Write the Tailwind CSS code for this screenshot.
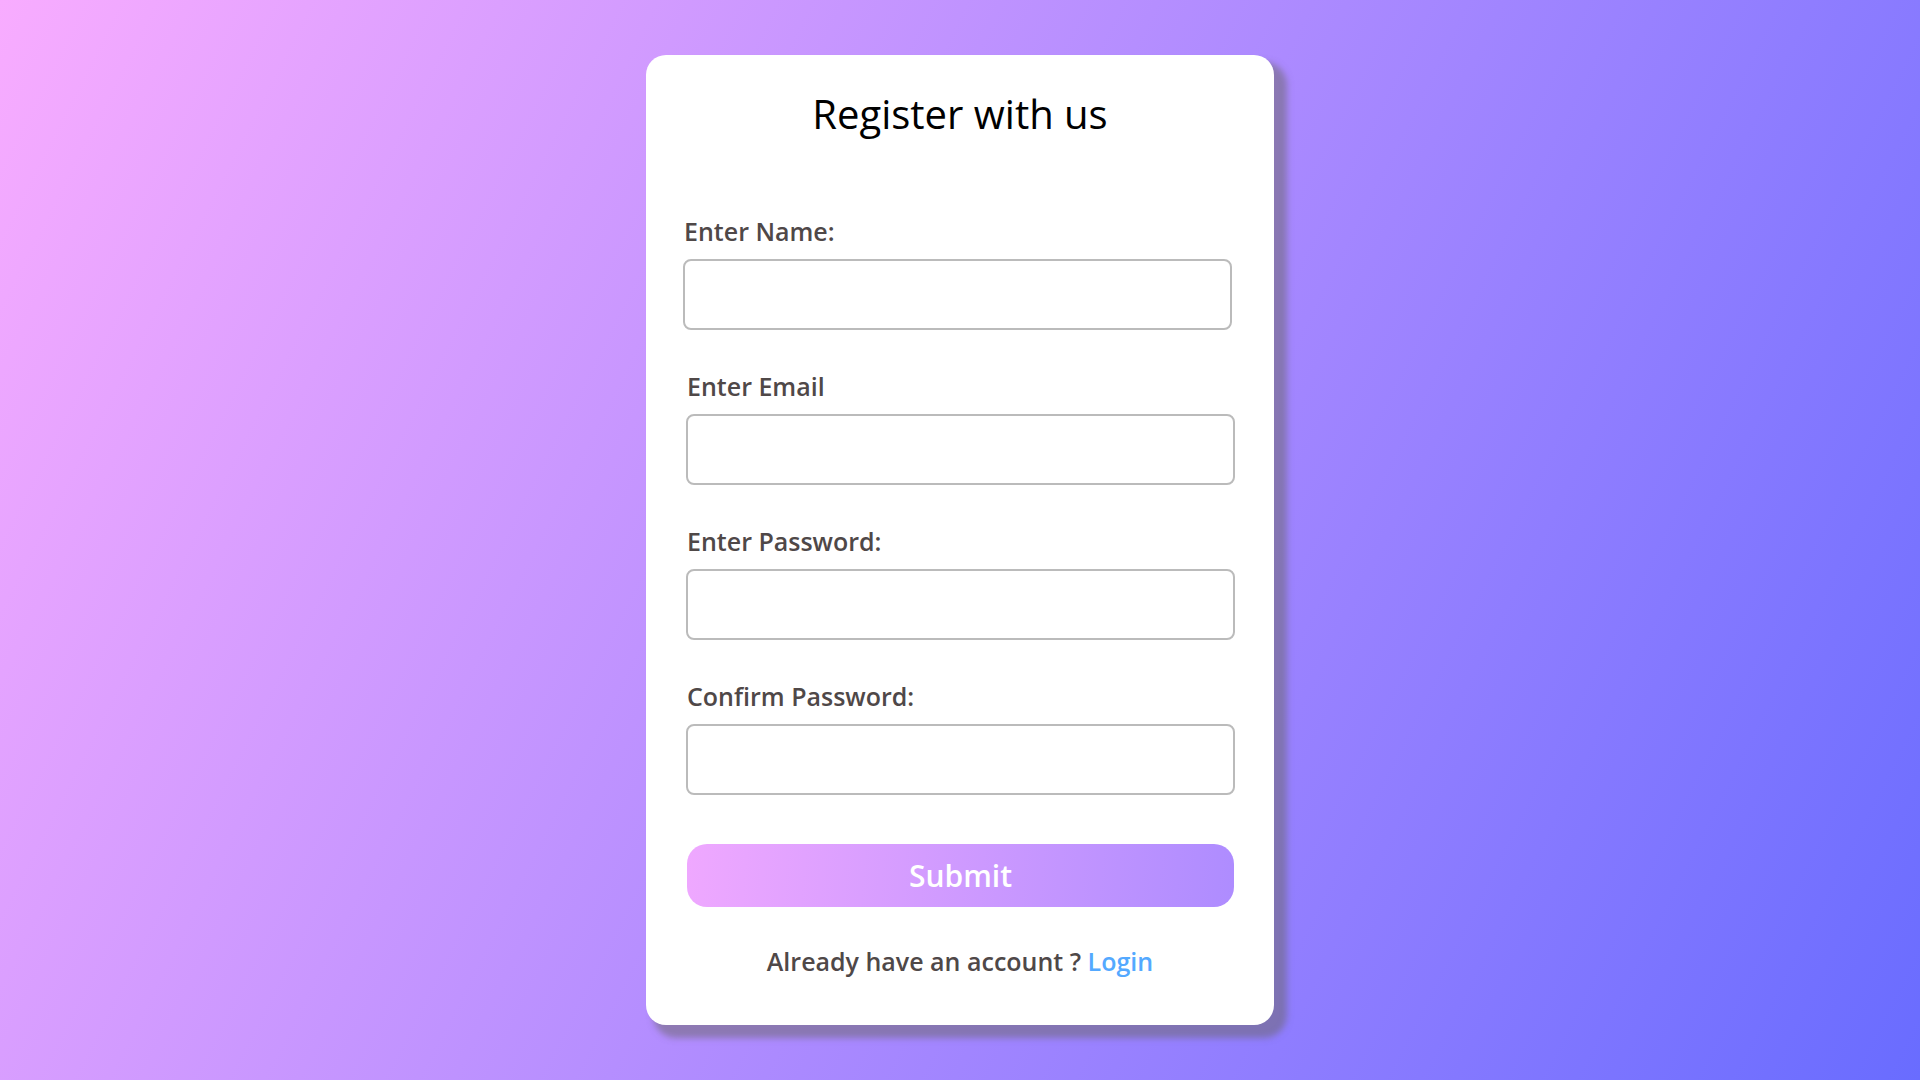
<!DOCTYPE html>
<html lang="en">
<head>
<meta charset="utf-8">
<meta name="viewport" content="width=device-width, initial-scale=1">
<title>Register</title>
<script src="https://cdn.jsdelivr.net/npm/@tailwindcss/browser@4"></script>
</head>
<body class="flex min-h-screen items-center justify-center bg-[linear-gradient(117deg,#f8acff_0%,#696cff_100%)] font-['Open_Sans',sans-serif]">
<main class="w-full max-w-[628px] rounded-[20px] bg-white px-10 pt-[27px] pb-[46px] shadow-[10px_10px_6px_3px_rgba(105,102,103,0.5)]">
<h1 class="text-center text-[40px] leading-[64px] text-black">Register with us</h1>
<form class="mt-[67px] flex flex-col text-[25px] font-semibold text-[#4f4848]">
<div class="-mr-px flex flex-col gap-[38px]">
<div class="mr-[3px] -ml-[3px] flex flex-col gap-[10px]"><label for="name" class="pl-px leading-9">Enter Name:</label><input id="name" type="text" class="h-[71px] rounded-lg border-2 border-[#bbb] px-4"></div>
<div class="flex flex-col gap-[10px]"><label for="email" class="pl-px leading-9">Enter Email</label><input id="email" type="email" class="h-[71px] rounded-lg border-2 border-[#bbb] px-4"></div>
<div class="flex flex-col gap-[10px]"><label for="password" class="pl-px leading-9">Enter Password:</label><input id="password" type="password" class="h-[71px] rounded-lg border-2 border-[#bbb] px-4"></div>
<div class="flex flex-col gap-[10px]"><label for="confirm" class="pl-px leading-9">Confirm Password:</label><input id="confirm" type="password" class="h-[71px] rounded-lg border-2 border-[#bbb] px-4"></div>
</div>
<button type="submit" class="ml-px mt-[49px] h-[63px] rounded-[20px] bg-[linear-gradient(95deg,#efa8ff,#ae8cff)] text-[30px] text-white">Submit</button>
<p class="mt-9 text-center leading-9">Already have an account ? <a href="#" class="text-[#54a9ff]">Login</a></p>
</form>
</main>
</body>
</html>
